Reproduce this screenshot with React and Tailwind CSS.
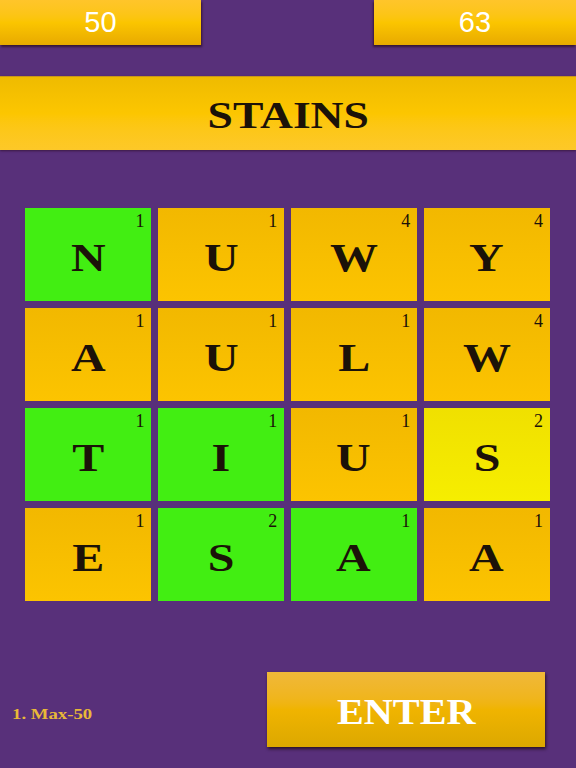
import React from 'react';

const tiles = [
  { l: 'N', n: 1, c: 'green' }, { l: 'U', n: 1, c: 'gold' }, { l: 'W', n: 4, c: 'gold' }, { l: 'Y', n: 4, c: 'gold' },
  { l: 'A', n: 1, c: 'gold' }, { l: 'U', n: 1, c: 'gold' }, { l: 'L', n: 1, c: 'gold' }, { l: 'W', n: 4, c: 'gold' },
  { l: 'T', n: 1, c: 'green' }, { l: 'I', n: 1, c: 'green' }, { l: 'U', n: 1, c: 'gold' }, { l: 'S', n: 2, c: 'yellow' },
  { l: 'E', n: 1, c: 'gold' }, { l: 'S', n: 2, c: 'green' }, { l: 'A', n: 1, c: 'green' }, { l: 'A', n: 1, c: 'gold' },
];

const tileBg = {
  green: 'bg-[#42ee12]',
  gold: 'bg-gradient-to-b from-[#f2b800] to-[#fcc400]',
  yellow: 'bg-gradient-to-b from-[#f0e000] to-[#f6ee00]',
};

const serif = "font-['Liberation_Serif',serif]";

export default function App() {
  return (
    <div className="w-[576px] h-[768px] bg-[#58307a] relative overflow-hidden flex flex-col">
      {/* scores */}
      <div className="flex justify-between h-[45px]">
        <div className="w-[201px] h-[45px] bg-gradient-to-b from-[#ffc52a] via-[#fbc500] to-[#e8aa00] shadow-[1px_2px_2px_rgba(40,10,30,0.7)] flex items-center justify-center">
          <span className="text-white text-[29px] font-['Liberation_Sans',sans-serif] leading-none">50</span>
        </div>
        <div className="w-[202px] h-[45px] bg-gradient-to-b from-[#ffc52a] via-[#fbc500] to-[#e8aa00] shadow-[-1px_2px_2px_rgba(40,10,30,0.7)] flex items-center justify-center">
          <span className="text-white text-[29px] font-['Liberation_Sans',sans-serif] leading-none">63</span>
        </div>
      </div>

      {/* current word */}
      <div className="mt-[31px] h-[74px] border-t border-[#c9961a] bg-gradient-to-b from-[#efbb00] via-[#fcc600] to-[#fdc828] shadow-[0_1px_2px_rgba(40,10,30,0.6)] flex items-center justify-center">
        <span className={`${serif} font-bold text-[#1b1208] text-[38px] leading-none scale-x-[1.2] mt-[2px]`}>STAINS</span>
      </div>

      {/* grid */}
      <div className="mt-[58px] ml-[25px] w-[525px] grid grid-cols-4 gap-x-[6.5px] gap-y-[7px]">
        {tiles.map((t, i) => (
          <div key={i} className={`relative h-[93px] ${tileBg[t.c]} flex items-center justify-center`}>
            <span className={`${serif} font-bold text-[#1b1208] text-[40px] leading-none mt-[7px] scale-x-[1.2]`}>{t.l}</span>
            <span className={`absolute top-[4px] right-[7px] ${serif} text-[#1b1208] text-[18px] leading-none`}>{t.n}</span>
          </div>
        ))}
      </div>

      {/* bottom */}
      <div className="mt-[71px] flex items-center">
        <div className="w-[267px] pl-[12px] pt-[7px]">
          <span className={`inline-block origin-left scale-x-[1.25] ${serif} font-bold text-[#e8b838] text-[15px]`}>1. Max-50</span>
        </div>
        <div className="w-[278px] h-[75px] bg-gradient-to-b from-[#f0b838] via-[#f0b400] to-[#dca800] shadow-[1px_2px_3px_rgba(30,10,20,0.8)] flex items-center justify-center">
          <span className={`${serif} font-bold text-white text-[35px] leading-none mt-[6px] scale-x-[1.15]`}>ENTER</span>
        </div>
      </div>
    </div>
  );
}
